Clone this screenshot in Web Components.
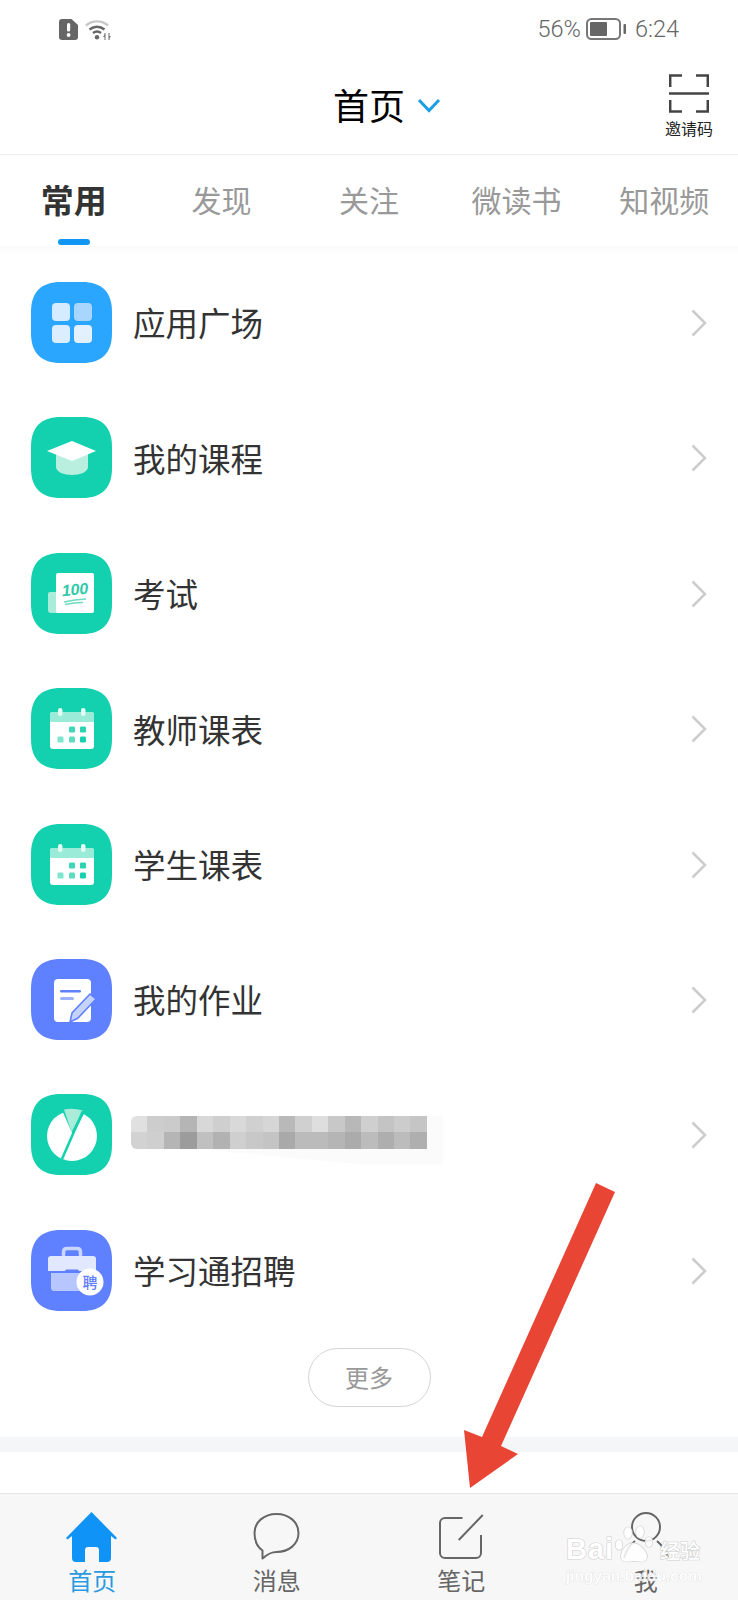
<!DOCTYPE html>
<html lang="zh-CN">
<head>
<meta charset="utf-8">
<title>首页</title>
<style>
  html, body { margin: 0; padding: 0; background: #fff; }
  body { font-family: "Noto Sans CJK SC", "Noto Sans", sans-serif; color: #333; }
  phone-page { width: 738px; height: 1600px; }
  app-row svg { display: block; }
</style>
</head>
<body>
<phone-page>
  <status-bar></status-bar>
  <app-header></app-header>
  <tab-strip></tab-strip>
  <app-list>
    <app-row label="应用广场">
      <svg slot="icon" viewBox="0 0 81 81" width="81" height="81">
        <path fill="#2ba6ff" d="M30 0H51C71 0 81 10 81 30V51C81 71 71 81 51 81H30C10 81 0 71 0 51V30C0 10 10 0 30 0Z"/>
        <rect x="21" y="21" width="18" height="18" rx="4" fill="#d5ebff"/>
        <rect x="43" y="21" width="18" height="18" rx="4" fill="#a9d6ff"/>
        <rect x="21" y="43" width="18" height="18" rx="4" fill="#dbeeff"/>
        <rect x="43" y="43" width="18" height="18" rx="4" fill="#e3f1ff"/>
      </svg>
    </app-row>
    <app-row label="我的课程">
      <svg slot="icon" viewBox="0 0 81 81" width="81" height="81">
        <path fill="#13d1ae" d="M30 0H51C71 0 81 10 81 30V51C81 71 71 81 51 81H30C10 81 0 71 0 51V30C0 10 10 0 30 0Z"/>
        <path fill="#b8efdf" d="M25 36H57V50C57 55 49 58 41 58S25 55 25 50Z"/>
        <path fill="#fff" d="M41 24L65 34 41 44 16 34Z"/>
      </svg>
    </app-row>
    <app-row label="考试">
      <svg slot="icon" viewBox="0 0 81 81" width="81" height="81">
        <path fill="#13d1ae" d="M30 0H51C71 0 81 10 81 30V51C81 71 71 81 51 81H30C10 81 0 71 0 51V30C0 10 10 0 30 0Z"/>
        <path fill="#a8ecd9" d="M17 41Q17 39 19 39H27V60H20Q17 60 17 57Z"/>
        <rect x="25" y="20" width="38" height="40" rx="2" fill="#fff"/>
        <text x="44" y="42" text-anchor="middle" font-family="Liberation Sans, sans-serif" font-style="italic" font-weight="700" font-size="16" fill="#2fc9a8" transform="rotate(-5 44 37)">100</text>
        <path d="M33 49Q44 46.500 55 46M34 51.500Q43 49.500 52 49.500" stroke="#6fdcc2" stroke-width="1.400" fill="none"/>
      </svg>
    </app-row>
    <app-row label="教师课表">
      <svg slot="icon" viewBox="0 0 81 81" width="81" height="81">
        <path fill="#13d1ae" d="M30 0H51C71 0 81 10 81 30V51C81 71 71 81 51 81H30C10 81 0 71 0 51V30C0 10 10 0 30 0Z"/>
        <rect x="19" y="24" width="44" height="37" rx="3" fill="#fff"/>
        <path fill="#9aebd8" d="M19 34V27Q19 24 22 24H60Q63 24 63 27V34Z"/>
        <rect x="27" y="20" width="4.500" height="8" rx="2.200" fill="#e6faf5"/><rect x="50" y="20" width="4.500" height="8" rx="2.200" fill="#e6faf5"/>
        <rect x="38" y="38.5" width="6" height="6" rx="1.200" fill="#3dd6b6"/><rect x="49" y="38.5" width="6" height="6" rx="1.200" fill="#2cd3b0"/>
        <rect x="26.500" y="48.500" width="6" height="6" rx="1.200" fill="#7fe5cd"/><rect x="38" y="48.5" width="6" height="6" rx="1.200" fill="#5ddcbf"/><rect x="49" y="48.5" width="6" height="6" rx="1.200" fill="#16d0ae"/>
      </svg>
    </app-row>
    <app-row label="学生课表">
      <svg slot="icon" viewBox="0 0 81 81" width="81" height="81">
        <path fill="#13d1ae" d="M30 0H51C71 0 81 10 81 30V51C81 71 71 81 51 81H30C10 81 0 71 0 51V30C0 10 10 0 30 0Z"/>
        <rect x="19" y="24" width="44" height="37" rx="3" fill="#fff"/>
        <path fill="#9aebd8" d="M19 34V27Q19 24 22 24H60Q63 24 63 27V34Z"/>
        <rect x="27" y="20" width="4.500" height="8" rx="2.200" fill="#e6faf5"/><rect x="50" y="20" width="4.500" height="8" rx="2.200" fill="#e6faf5"/>
        <rect x="38" y="38.5" width="6" height="6" rx="1.200" fill="#3dd6b6"/><rect x="49" y="38.5" width="6" height="6" rx="1.200" fill="#2cd3b0"/>
        <rect x="26.500" y="48.500" width="6" height="6" rx="1.200" fill="#7fe5cd"/><rect x="38" y="48.5" width="6" height="6" rx="1.200" fill="#5ddcbf"/><rect x="49" y="48.5" width="6" height="6" rx="1.200" fill="#16d0ae"/>
      </svg>
    </app-row>
    <app-row label="我的作业">
      <svg slot="icon" viewBox="0 0 81 81" width="81" height="81">
        <path fill="#5f80ff" d="M30 0H51C71 0 81 10 81 30V51C81 71 71 81 51 81H30C10 81 0 71 0 51V30C0 10 10 0 30 0Z"/>
        <rect x="23" y="20" width="37" height="43" rx="4" fill="#fff"/>
        <rect x="29" y="31" width="21" height="2.500" rx="1.200" fill="#5f80ff"/>
        <rect x="29" y="38" width="14" height="3" rx="1.500" fill="#9db1ff"/>
        <path fill="#c5d2fa" stroke="#5f80ff" stroke-width="1.600" d="M59 35L65 40 47 59 39 63 41 54Z"/>
      </svg>
    </app-row>
    <app-row>
      <svg slot="icon" viewBox="0 0 81 81" width="81" height="81">
        <path fill="#13d1ae" d="M30 0H51C71 0 81 10 81 30V51C81 71 71 81 51 81H30C10 81 0 71 0 51V30C0 10 10 0 30 0Z"/>
        <circle cx="41" cy="42" r="25" fill="#fff"/>
        <path fill="#13d1ae" d="M30 14H56L42 41Z"/>
        <path fill="#a8ecd9" d="M33 15.500Q42 13.500 52 16.500L40.500 38Z"/>
        <path stroke="#13d1ae" stroke-width="2.500" fill="none" d="M52 17L31 65"/>
      </svg>
      <blur-mosaic slot="text"></blur-mosaic>
    </app-row>
    <app-row label="学习通招聘">
      <svg slot="icon" viewBox="0 0 81 81" width="81" height="81">
        <path fill="#5f80ff" d="M30 0H51C71 0 81 10 81 30V51C81 71 71 81 51 81H30C10 81 0 71 0 51V30C0 10 10 0 30 0Z"/>
        <path fill="none" stroke="#c9d4ff" stroke-width="3.500" d="M32.500 27V22Q32.500 18.500 36 18.500H46Q49.500 18.500 49.500 22V27"/>
        <path fill="#e2e8ff" d="M20 26H62Q65 26 65 29V41H17V29Q17 26 20 26Z"/>
        <path fill="#b8c6ff" d="M20 43H65V58Q65 61 62 61H23Q20 61 20 58Z"/>
        <rect x="34" y="39.500" width="14" height="3" rx="1.500" fill="#5f80ff"/>
        <circle cx="59" cy="52" r="13.500" fill="#fff"/>
        <text x="59" y="58" text-anchor="middle" font-size="15" font-weight="500" fill="#5f80ff" font-family="Noto Sans CJK SC, sans-serif">聘</text>
      </svg>
    </app-row>
  </app-list>
  <more-button>更多</more-button>
  <gray-band></gray-band>
  <bottom-tabs>
    <tab-item active label="首页">
      <svg viewBox="0 0 60 52" width="60" height="52">
        <path fill="#0f93f6" d="M29.500 1L55 27 53.500 28.500 49 25V47a4 4 0 0 1-4 4H37V39a3 3 0 0 0-3-3H26a3 3 0 0 0-3 3V51H14a4 4 0 0 1-4-4V25L5.500 28.500 4 27Z"/>
      </svg>
    </tab-item>
    <tab-item label="消息">
      <svg viewBox="0 0 60 52" width="60" height="52">
        <path fill="none" stroke="#666" stroke-width="2" stroke-linejoin="round" d="M15.500 47.500V39.500C10.500 36 7.500 30 7.500 22 7.500 11 17 3 29.500 3S51.500 11 51.500 22 42 41 29.500 41C25 41 22 42 15.500 47.500Z"/>
      </svg>
    </tab-item>
    <tab-item label="笔记">
      <svg viewBox="0 0 60 52" width="60" height="52">
        <path fill="none" stroke="#666" stroke-width="2" d="M31.500 7H14a5 5 0 0 0-5 5V42a5 5 0 0 0 5 5H45a5 5 0 0 0 5-5V24"/>
        <path fill="none" stroke="#666" stroke-width="2" d="M51.750 4L27.750 29"/>
      </svg>
    </tab-item>
    <tab-item label="我">
      <svg viewBox="0 0 60 52" width="60" height="52">
        <circle cx="30" cy="16" r="14" fill="none" stroke="#666" stroke-width="2"/>
        <path fill="none" stroke="#666" stroke-width="2" d="M8 47Q11 36 19 30M41 30Q48 36 52 46"/>
      </svg>
    </tab-item>
  </bottom-tabs>
  <photo-marks></photo-marks>
</phone-page>

<script>
function define(name, css, html) {
  customElements.define(name, class extends HTMLElement {
    constructor() {
      super();
      const root = this.attachShadow({ mode: 'open' });
      root.innerHTML = '<style>' + css + '</style>' + (typeof html === 'function' ? html(this) : html);
    }
  });
}

define('phone-page',
  ':host{display:flex;flex-direction:column;position:relative;overflow:hidden;background:#fff;}',
  '<slot></slot>');

define('status-bar',
  `:host{display:flex;align-items:center;justify-content:space-between;height:58px;padding:0 59px;box-sizing:border-box;color:#666;font:300 23.500px/30px Roboto,sans-serif;}
   .l,.r{display:flex;align-items:center;}
   .l{gap:7px;} .r svg{margin:0 9px 0 5px;}`,
  `<div class="l">
     <svg width="19" height="21" viewBox="0 0 19 21"><path fill="#666" d="M3 0H12.500L19 6V18a3 3 0 0 1-3 3H3a3 3 0 0 1-3-3V3a3 3 0 0 1 3-3Z"/><rect x="8" y="4" width="3.200" height="8.500" rx="1.500" fill="#fff"/><circle cx="9.600" cy="16" r="1.900" fill="#fff"/></svg>
     <svg width="26" height="21" viewBox="0 0 26 21" fill="none"><path d="M1 6.500C7 1 17 1 23 6.500" stroke="#c8c8c8" stroke-width="2.400"/><path d="M4.500 10.500C9 6.800 15 6.800 19.500 10.500" stroke="#666" stroke-width="2.400"/><path d="M8 14C10.500 12 13.500 12 16 14" stroke="#666" stroke-width="2.400"/><circle cx="12" cy="18.300" r="2.200" fill="#666"/><path d="M20 14V21M24 14V21" stroke="#888" stroke-width="1.200"/><path d="M20 15L18 18H20ZM24 20L26 17H24Z" fill="#777"/></svg>
   </div>
   <div class="r"><span>56%</span>
     <svg width="40" height="22" viewBox="0 0 40 22"><rect x="1" y="1" width="33" height="20" rx="4.500" fill="none" stroke="#777" stroke-width="2"/><rect x="4" y="4" width="17" height="14" rx="1" fill="#666"/><rect x="37.500" y="6" width="2.500" height="10" rx="1" fill="#666"/></svg>
     <span>6:24</span></div>`);

define('app-header',
  `:host{display:grid;grid-template-columns:1fr auto 1fr;align-items:center;height:97px;box-sizing:border-box;border-bottom:1px solid #eee;}
   .t{grid-column:2;font-size:36px;line-height:48px;color:#000;margin-top:-4px;}
   .r{grid-column:3;display:flex;align-items:center;padding:0 25px 0 12px;}
   .scan{margin-left:auto;display:flex;flex-direction:column;align-items:center;font-size:16px;line-height:22px;color:#222;white-space:nowrap;}
   .scan svg{display:block;margin-bottom:4px;}`,
  `<div class="t">首页</div>
   <div class="r">
     <svg width="24" height="15" viewBox="0 0 24 15" style="margin-top:-2px"><path d="M2 2L12 12.500 22 2" fill="none" stroke="#1a9ee5" stroke-width="3"/></svg>
     <div class="scan">
       <svg width="40" height="39" viewBox="0 0 40 39" fill="none" stroke="#444" stroke-width="2.500"><path d="M1.200 13V1.500H13M27 1.500H38.800V13M1.200 26V37.500H13M27 37.500H38.800V26"/><path d="M0 19.500H40"/></svg>
       <span>邀请码</span>
     </div>
   </div>`);

define('tab-strip',
  `:host{display:grid;grid-template-columns:repeat(5,1fr);height:91px;box-sizing:border-box;padding-top:23px;}
   div{display:flex;flex-direction:column;align-items:center;font-size:30px;line-height:42px;color:#999;}
   .on{font-size:33px;font-weight:700;color:#333;}
   .on::after{content:"";width:32px;height:6px;border-radius:3px;background:#1296f3;margin-top:19px;}`,
  `<div class="on">常用</div><div>发现</div><div>关注</div><div>微读书</div><div>知视频</div>`);

define('app-list',
  `:host{display:block;height:1083.200px;padding-top:8.800px;background:linear-gradient(#fafafa,#fff 10px);}`,
  '<slot></slot>');

define('app-row',
  `:host{display:flex;align-items:center;height:135.400px;padding:0 31px;box-sizing:border-box;font-size:32.500px;color:#333;}
   .i{width:81px;height:81px;flex:none;margin-right:21px;}
   .t{flex:1;display:flex;align-items:center;line-height:44px;}
   svg.c{flex:none;display:block;margin-top:1px;}`,
  el => `<div class="i"><slot name="icon"></slot></div>
     <div class="t"><slot name="text">${el.getAttribute('label') || ''}</slot></div>
     <svg class="c" width="16" height="28" viewBox="0 0 16 28"><path d="M1.500 1.500L14 14 1.500 26.500" fill="none" stroke="#ccc" stroke-width="2.500"/></svg>`);

define('blur-mosaic',
  `:host{display:block;margin:11px 0 0 -2px;padding:0 16px 16px 0;background:#fbfbfb;clip-path:polygon(0 0,100% 0,100% 100%,75% 100%,22% 68%,0 68%);}
   .g{display:grid;grid-template-columns:repeat(18,16.440px);grid-template-rows:repeat(2,16.500px);border-radius:6px 0 0 6px;overflow:hidden;filter:blur(.4px);}`,
  () => {
    const a = 'e0 cd cb b5 d8 cf d9 d0 d6 b9 d0 de c8 b8 cf c4 cc c5 d2 cf b5 9c c0 b2 cf c8 c4 a9 bb bb b5 ab bc ae bc af'.split(' ');
    return '<div class="g">' + a.map(c => `<i style="background:#${c}${c}${c}"></i>`).join('') + '</div>';
  });

define('more-button',
  `:host{display:block;width:123px;height:59px;margin:10px auto 0;box-sizing:border-box;border:1.500px solid #d4d4d4;border-radius:30px;text-align:center;font-size:24px;line-height:55px;color:#999;}`,
  '<slot></slot>');

define('gray-band',
  `:host{display:block;height:15px;margin-top:30px;background:#f5f6f7;}`, '');

define('bottom-tabs',
  `:host{display:grid;grid-template-columns:repeat(4,1fr);height:107px;margin-top:auto;box-sizing:border-box;border-top:1px solid #e6e6e6;background:#f7f7f7;padding-top:17px;}`,
  '<slot></slot>');

define('tab-item',
  `:host{display:flex;flex-direction:column;align-items:center;font-size:24px;line-height:30px;color:#666;}
   :host([active]){color:#2a9ae0;}
   ::slotted(svg){display:block;}
   span{margin-top:2px;}`,
  el => `<slot></slot><span>${el.getAttribute('label')}</span>`);

define('photo-marks',
  `:host{position:absolute;left:0;top:0;width:738px;height:1600px;pointer-events:none;}
   svg.a{position:absolute;left:0;top:0;}
   .w{position:absolute;left:566px;top:1534px;width:134px;color:#fff;font-family:"Liberation Sans",sans-serif;paint-order:stroke;-webkit-text-stroke:1.200px #cfcfcf;}
   .m{display:flex;align-items:center;height:30px;font-size:29px;font-weight:700;letter-spacing:1px;}
   .m b{font:500 20px/30px "Noto Sans CJK SC",sans-serif;letter-spacing:0;margin-left:auto;margin-top:4px;}
   .m svg{margin:-8px 0 0 -2px;}
   .u{font-size:15.500px;line-height:18px;margin-top:3px;font-weight:700;white-space:nowrap;-webkit-text-stroke:.7px #d6d6d6;opacity:.85;}`,
  `<svg class="a" width="738" height="1600"><polygon fill="#e94535" points="596,1183 615,1192 501,1446 518,1454 470,1488 464,1430 482,1437"/></svg>
   <div class="w">
     <div class="m"><span>Bai</span>
       <svg width="46" height="40" viewBox="0 0 46 40" fill="#fff" fill-opacity=".85" stroke="#cfcfcf" stroke-width="1.200"><ellipse cx="7" cy="20" rx="3.500" ry="5"/><ellipse cx="16" cy="8" rx="4" ry="6"/><ellipse cx="28" cy="7" rx="4" ry="6"/><ellipse cx="37" cy="17" rx="3.500" ry="5"/><path d="M21 18C14 18 8 27 9 33 10 38 17 37 22 36 27 37 34 38 35 33 36 27 28 18 21 18Z"/></svg>
       <b>经验</b></div>
     <div class="u">jingyan.baidu.com</div>
   </div>`);
</script>
</body>
</html>
